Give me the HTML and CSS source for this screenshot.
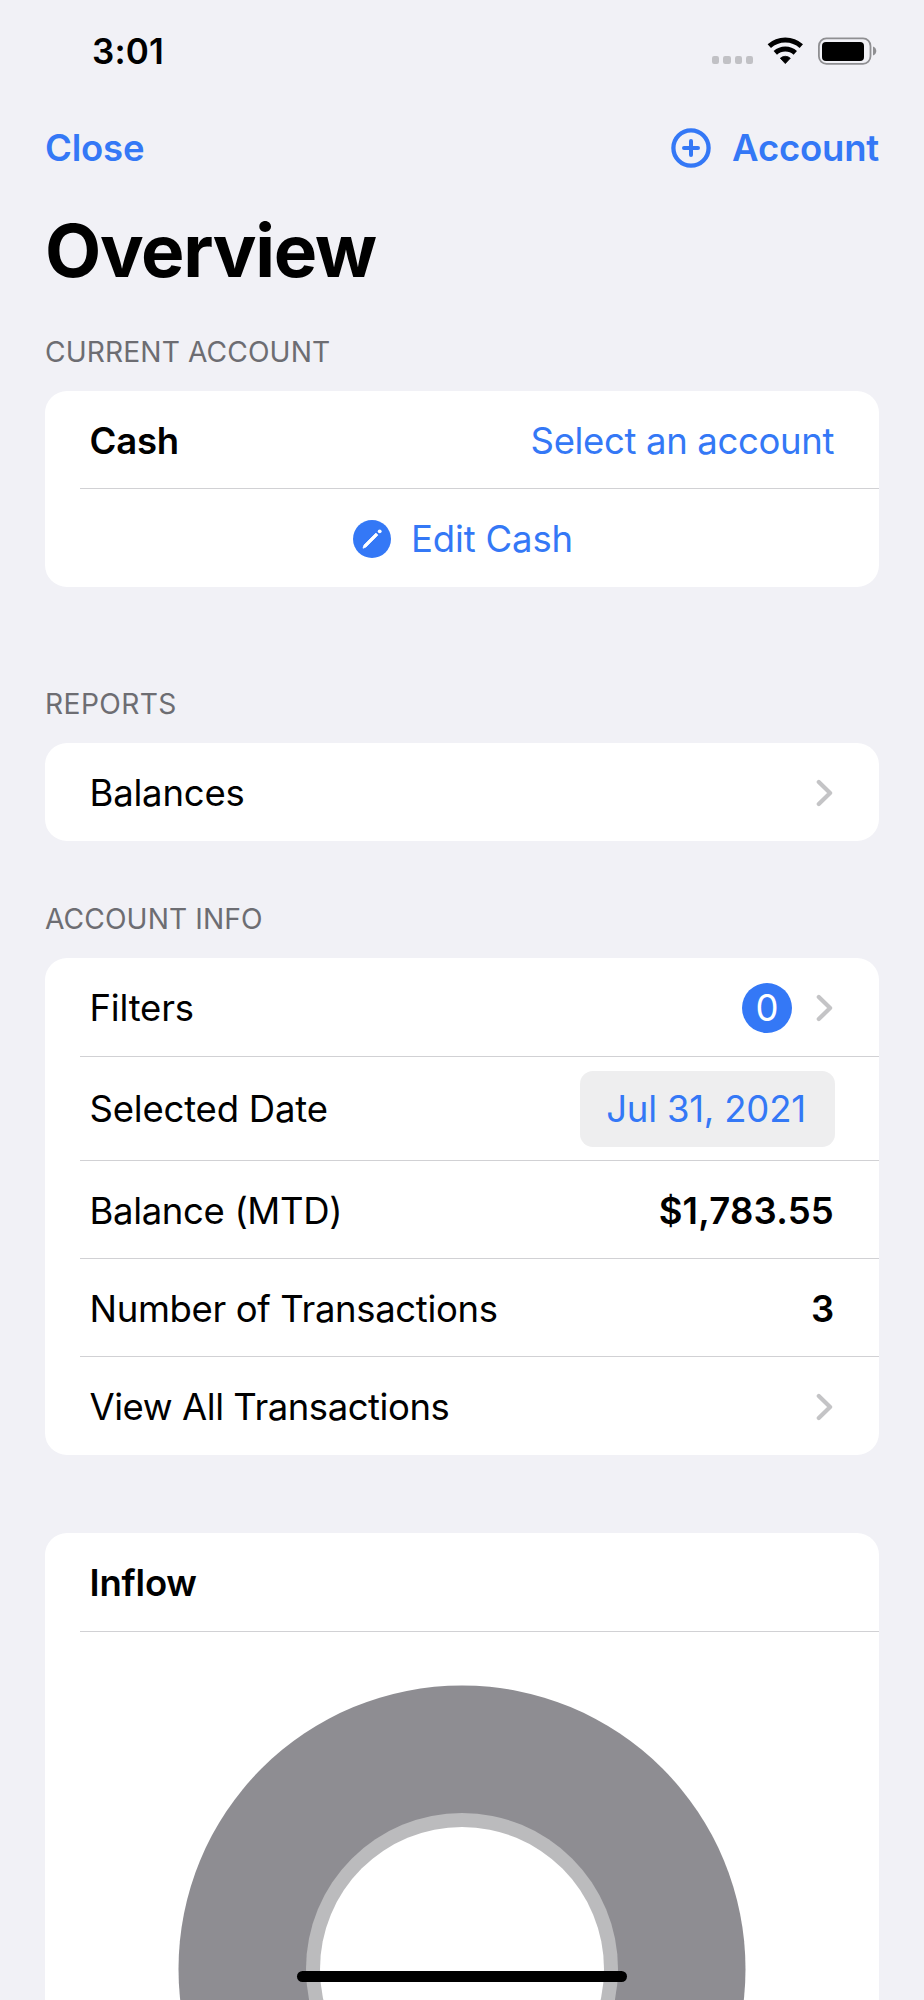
FILE: index.html
```
<!DOCTYPE html>
<html lang="en">
<head>
  <meta charset="UTF-8">
  <meta name="viewport" content="width=device-width, initial-scale=1.0">
  <title>Overview</title>
  <link rel="stylesheet" href="styles.css">
</head>
<body>
  <div class="screen">
    <div class="status-bar">
      <span class="time">3:01</span>
      <div class="status-icons">
        <div class="signal"><i></i><i></i><i></i><i></i></div>
        <svg class="wifi" width="37" height="28" viewBox="0 0 37 28">
          <path d="M2.3 9.2A23.9 23.9 0 0 1 34.3 9.2M8.3 15.9A14.9 14.9 0 0 1 28.3 15.9" fill="none" stroke="#000" stroke-width="5"/>
          <path d="M18.3 26.6L13.3 21.2A7.5 7.5 0 0 1 23.3 21.2Z" stroke="#000" stroke-width="0.8" stroke-linejoin="round"/>
        </svg>
        <svg class="battery" width="60" height="28" viewBox="0 0 60 28">
          <rect x="0.9" y="1.4" width="51.6" height="25.4" rx="7.5" fill="none" stroke="#8f8f92" stroke-width="1.8"/>
          <rect x="4" y="5" width="42" height="19" rx="4"/>
          <path d="M55 9.6c4.4 1.6 4.4 7.4 0 9z" fill="#8f8f92"/>
        </svg>
      </div>
    </div>

    <nav class="nav">
      <a class="nav-link">Close</a>
      <a class="nav-link nav-add">
        <svg width="40" height="40" viewBox="0 0 40 40" fill="none" stroke="#3478f6" stroke-width="4">
          <circle cx="20" cy="20" r="17.6" stroke-width="4.3"/>
          <path d="M20 13V27M13 20H27" stroke-linecap="round"/>
        </svg>
        <span>Account</span>
      </a>
    </nav>

    <h1>Overview</h1>

    <h2>CURRENT ACCOUNT</h2>
    <div class="card">
      <div class="row">
        <b>Cash</b>
        <a class="link">Select an account</a>
      </div>
      <div class="row centered">
        <svg width="38" height="38" viewBox="0 0 38 38">
          <circle cx="19" cy="19" r="19" fill="#3478f6"/>
          <path d="M10 28.2l1-3.2L22.9 13.1l2 2L13 27z" fill="#fff" stroke="#fff" stroke-width="0.8" stroke-linejoin="round"/>
          <circle cx="26.7" cy="11.3" r="1.9" fill="#fff"/>
        </svg>
        <a class="link edit">Edit Cash</a>
      </div>
    </div>

    <h2 class="reports">REPORTS</h2>
    <div class="card">
      <div class="row tall">
        <span>Balances</span>
        <svg class="chevron" width="20" height="28" viewBox="0 0 20 28"><path d="M4.8 2.9L16.1 14L4.8 25.1"/></svg>
      </div>
    </div>

    <h2 class="info">ACCOUNT INFO</h2>
    <div class="card">
      <div class="row tall">
        <span>Filters</span>
        <div class="row-end">
          <span class="badge">0</span>
          <svg class="chevron" width="20" height="28" viewBox="0 0 20 28"><path d="M4.8 2.9L16.1 14L4.8 25.1"/></svg>
        </div>
      </div>
      <div class="row date-row">
        <span>Selected Date</span>
        <span class="date">Jul 31, 2021</span>
      </div>
      <div class="row">
        <span class="long">Balance (MTD)</span>
        <b class="amount">$1,783.55</b>
      </div>
      <div class="row">
        <span class="long">Number of Transactions</span>
        <b>3</b>
      </div>
      <div class="row">
        <span class="tight">View All Transactions</span>
        <svg class="chevron" width="20" height="28" viewBox="0 0 20 28"><path d="M4.8 2.9L16.1 14L4.8 25.1"/></svg>
      </div>
    </div>

    <div class="card chart-card">
      <div class="row tall">
        <b>Inflow</b>
      </div>
      <div class="chart">
        <svg width="568" height="568" viewBox="0 0 568 568">
          <circle cx="284" cy="284" r="283.5" fill="#8e8d92"/>
          <circle cx="284" cy="284" r="156" fill="#bbbbbd"/>
          <circle cx="284" cy="284" r="142" fill="#fff"/>
        </svg>
      </div>
    </div>

    <div class="home-bar"></div>
  </div>
</body>
</html>
```
FILE: styles.css
```
* {
  box-sizing: border-box;
}

body {
  margin: 0;
  background: #f1f1f6;
  color: #000;
  font-family: Inter, "Liberation Sans", sans-serif;
  font-size: 36.5px;
  letter-spacing: -0.2px;
}

svg {
  display: block;
  flex: none;
}

b {
  font-weight: 600;
}

.screen {
  position: relative;
  height: 2000px;
  padding: 0 45px;
  overflow: hidden;
}

.status-bar {
  display: flex;
  align-items: center;
  justify-content: space-between;
  height: 101px;
  padding: 0 1px 0 47px;
}

.time {
  font-size: 35px;
  font-weight: 600;
  letter-spacing: 0.2px;
}

.status-icons {
  display: flex;
  align-items: flex-end;
}

.signal {
  display: flex;
  gap: 4px;
  margin: 0 14px 1px 0;
}

.signal i {
  width: 7.2px;
  height: 7.2px;
  border-radius: 2.2px;
  background: #c1c1c5;
}

.wifi {
  margin-right: 14px;
}

.nav {
  display: flex;
  align-items: center;
  justify-content: space-between;
  height: 94px;
}

.nav-link {
  color: #3478f6;
  font-weight: 600;
}

.nav-add {
  display: flex;
  align-items: center;
  gap: 21.5px;
}

h1 {
  margin: 0;
  font-size: 73px;
  font-weight: 700;
  line-height: 111px;
  letter-spacing: -1.3px;
}

h2 {
  margin: 26px 0 18px;
  font-size: 28.2px;
  font-weight: 400;
  line-height: 41px;
  letter-spacing: 0.1px;
  color: #6d6d72;
}

.reports {
  margin-top: 97px;
  letter-spacing: 0.4px;
}

.info {
  margin-top: 58px;
}

.card {
  border-radius: 22px;
  background: #fff;
}

.row {
  display: flex;
  align-items: center;
  justify-content: space-between;
  height: 97px;
  margin-left: 35px;
  padding: 2px 45px 0 9.5px;
}

.row.tall {
  height: 98px;
}

.row + .row {
  height: 98px;
  border-top: 1px solid #d1d1d4;
}

.row.centered,
.row:last-child:not(:first-child) {
  height: 99px;
}

.row.centered {
  justify-content: center;
  gap: 20px;
  margin-left: 0;
  padding: 2px 0 0 2px;
  border: 0;
  background: linear-gradient(#d1d1d4, #d1d1d4) 35px 0 / 100% 1px no-repeat;
}

.row + .date-row {
  height: 104px;
  padding: 1px 44.5px 0 9.5px;
}

.row-end {
  display: flex;
  align-items: center;
  gap: 22px;
}

.link {
  color: #3478f6;
}

.link,
.long {
  letter-spacing: -0.35px;
}

.edit {
  letter-spacing: -0.15px;
}

.tight {
  letter-spacing: -0.45px;
}

.amount {
  letter-spacing: 0.2px;
}

.badge {
  width: 50px;
  height: 50px;
  border-radius: 50%;
  background: #3478f6;
  color: #fff;
  line-height: 50px;
  text-align: center;
}

.date {
  width: 255px;
  height: 76px;
  padding-right: 2px;
  border-radius: 13px;
  background: #eeeeef;
  color: #3478f6;
  line-height: 77px;
  text-align: center;
}

.chevron {
  fill: none;
  stroke: #c4c4c6;
  stroke-width: 4.2;
  stroke-linecap: round;
  stroke-linejoin: round;
}

.chart-card {
  margin-top: 78px;
}

.chart {
  display: flex;
  justify-content: center;
  margin-left: 35px;
  padding: 53px 35px 53px 0;
  border-top: 1px solid #d1d1d4;
}

/* home indicator floats over the scrolled list */
.home-bar {
  position: absolute;
  left: 297px;
  bottom: 18px;
  width: 330px;
  height: 11px;
  border-radius: 6px;
  background: #000;
}
```
